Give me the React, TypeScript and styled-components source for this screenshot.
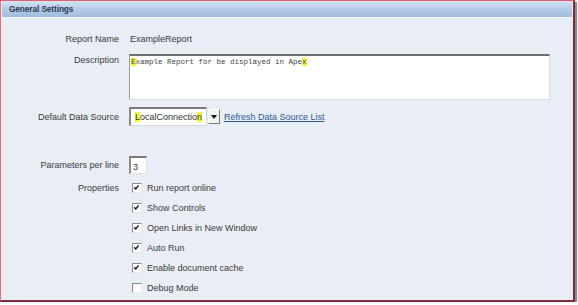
import styled, { createGlobalStyle } from "styled-components"

const GlobalStyle = createGlobalStyle`
    html, body {
        margin: 0;
        padding: 0;
        background: #ffffff;
    }
    body {
        font-family: "Liberation Sans", Arial, sans-serif;
    }
`

const Frame = styled.div`
    box-sizing: border-box;
    width: 575px;
    height: 302px;
    border-top: 1px solid #e0606c;
    border-left: 1px solid #e4707a;
    border-right: 2px solid #7e2c36;
    border-bottom: 2px solid #7e2c36;
    box-shadow: 2px 2px 1px #8c8c8c;
    background: #e9edf5;
    overflow: hidden;
`

const Header = styled.div`
    height: 16px;
    display: flex;
    align-items: center;
    padding-left: 7px;
    margin: 0 1px;
    background: linear-gradient(#d4e2f1, #b6cde6 50%, #9fbcdb);
    border-bottom: 1px solid #f5f7fb;
    font-size: 8.3px;
    font-weight: bold;
    color: #2a3c55;
    letter-spacing: -0.1px;
`

const Form = styled.div`
    display: flex;
    flex-direction: column;
`

const Row = styled.div<{ $mt?: number; $h?: number; $top?: boolean }>`
    display: flex;
    align-items: ${p => (p.$top ? "flex-start" : "center")};
    margin-top: ${p => p.$mt ?? 0}px;
    height: ${p => (p.$h ? `${p.$h}px` : "auto")};
    font-size: 9px;
    color: #3a3a3a;
`

const Label = styled.div<{ $pt?: number }>`
    width: 118px;
    flex: none;
    text-align: right;
    line-height: 12px;
    margin-right: 10px;
    padding-top: ${p => p.$pt ?? 0}px;
`

const Value = styled.div`
    line-height: 12px;
    padding-left: 1px;
`

const TextArea = styled.div`
    box-sizing: border-box;
    width: 421px;
    height: 46px;
    background: #ffffff;
    border-top: 2px solid #6e6e6e;
    border-left: 1px solid #9a9a9a;
    border-right: 1px solid #d8dbe2;
    border-bottom: 1px solid #d8dbe2;
    padding: 1px 1px;
    font-family: "Liberation Mono", "Courier New", monospace;
    font-size: 7.5px;
    line-height: 10px;
    color: #444;
`

const Mark = styled.span`
    background: #f6f23a;
`

const Select = styled.div`
    box-sizing: border-box;
    width: 78px;
    height: 19px;
    display: flex;
    align-items: center;
    padding-left: 4px;
    background: #ffffff;
    border-top: 2px solid #7a7a7a;
    border-left: 2px solid #8a8a8a;
    border-right: 1px solid #d6d6d6;
    border-bottom: 1px solid #d6d6d6;
    color: #333;
`

const DropButton = styled.div`
    box-sizing: border-box;
    width: 12px;
    height: 15px;
    margin-left: 1px;
    display: flex;
    align-items: center;
    justify-content: center;
    background: #f2f2f2;
    border-top: 1px solid #ffffff;
    border-left: 1px solid #ffffff;
    border-right: 1px solid #7a7a7a;
    border-bottom: 1px solid #7a7a7a;
`

const Link = styled.a`
    margin-left: 4px;
    color: #2b5c94;
    text-decoration: underline;
    cursor: pointer;
`

const NumberBox = styled.div`
    box-sizing: border-box;
    width: 18px;
    height: 18px;
    padding: 3px 0 0 2px;
    background: #ffffff;
    border-top: 2px solid #7a7a7a;
    border-left: 2px solid #8a8a8a;
    border-right: 1px solid #e0e0e0;
    border-bottom: 1px solid #e0e0e0;
    line-height: 12px;
    color: #333;
`

const CheckBox = styled.div`
    box-sizing: border-box;
    width: 10px;
    height: 10px;
    margin-left: 3px;
    margin-right: 5px;
    background: #ffffff;
    border-top: 1px solid #8a8a8a;
    border-left: 1px solid #8a8a8a;
    border-right: 1px solid #e6e6e6;
    border-bottom: 1px solid #e6e6e6;
    display: flex;
    align-items: flex-start;
    justify-content: flex-start;
`

const Check = ({ on }: { on: boolean }) => (
    <CheckBox>
        {on && (
            <svg width="8" height="8" viewBox="0 0 8 8">
                <path d="M1.2 3.2 L2.8 5 L5.6 1.4" fill="none" stroke="#111" strokeWidth="1.3" />
            </svg>
        )}
    </CheckBox>
)

const props = [
    { label: "Run report online", on: true },
    { label: "Show Controls", on: true },
    { label: "Open Links in New Window", on: true },
    { label: "Auto Run", on: true },
    { label: "Enable document cache", on: true },
    { label: "Debug Mode", on: false },
]

export default function App() {
    return (
        <>
            <GlobalStyle />
            <Frame>
                <Header>General Settings</Header>
                <Form>
                    <Row $mt={14} $h={14}>
                        <Label>Report Name</Label>
                        <Value>ExampleReport</Value>
                    </Row>
                    <Row $mt={8} $top>
                        <Label>Description</Label>
                        <TextArea>
                            <Mark>E</Mark>xample Report for be displayed in Ape<Mark>x</Mark>
                        </TextArea>
                    </Row>
                    <Row $mt={7}>
                        <Label>Default Data Source</Label>
                        <Select>
                            <span>
                                <Mark>L</Mark>ocalConnectio<Mark>n</Mark>
                            </span>
                        </Select>
                        <DropButton>
                            <svg width="6" height="4" viewBox="0 0 6 4">
                                <path d="M0 0 L6 0 L3 4 Z" fill="#111" />
                            </svg>
                        </DropButton>
                        <Link>Refresh Data Source List</Link>
                    </Row>
                    <Row $mt={30}>
                        <Label>Parameters per line</Label>
                        <NumberBox>3</NumberBox>
                    </Row>
                    <Row $mt={4} $top>
                        <Label $pt={4}>Properties</Label>
                        <div>
                            {props.map(p => (
                                <Row key={p.label} $h={20}>
                                    <Check on={p.on} />
                                    <span>{p.label}</span>
                                </Row>
                            ))}
                        </div>
                    </Row>
                </Form>
            </Frame>
        </>
    )
}
